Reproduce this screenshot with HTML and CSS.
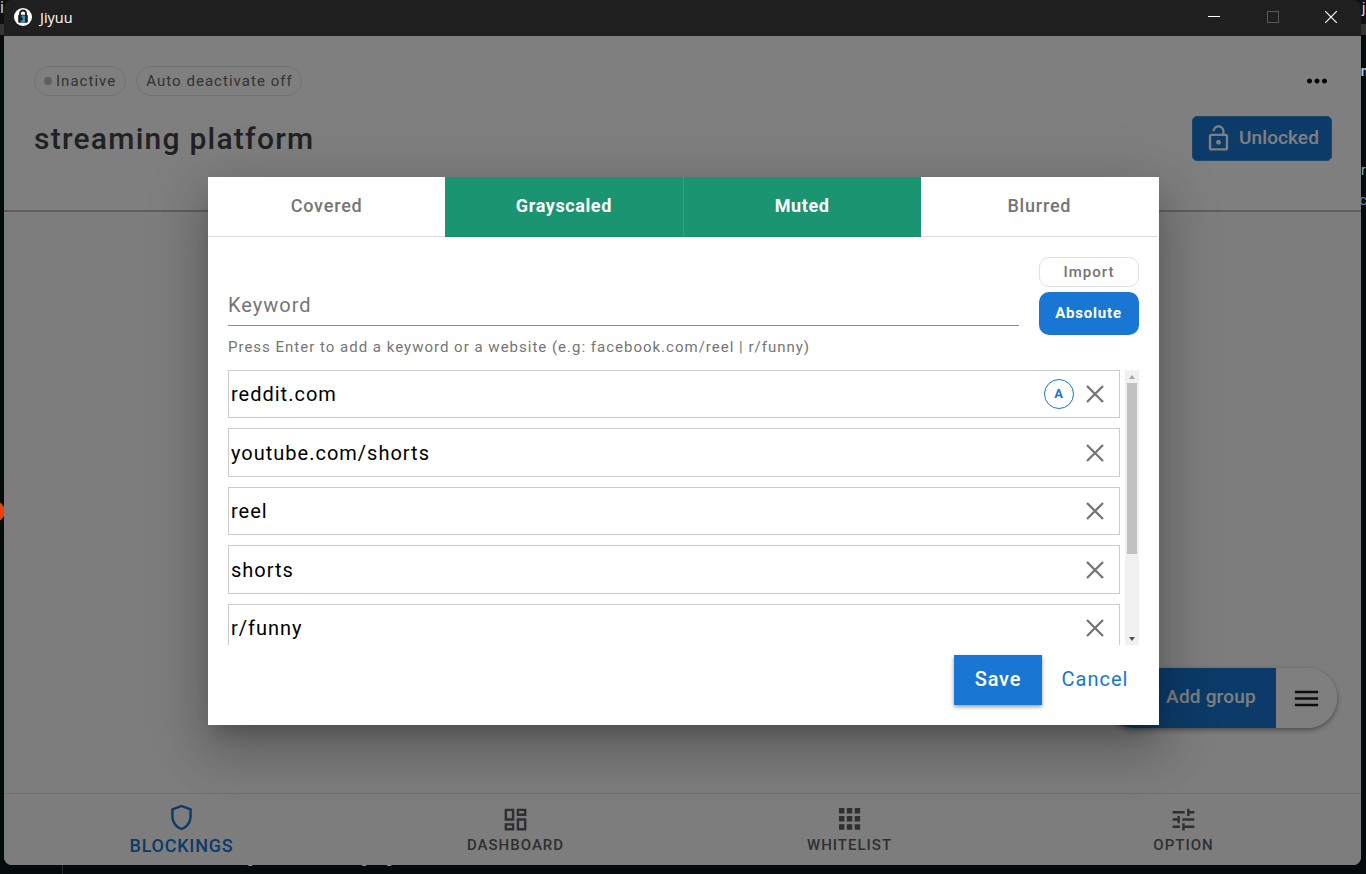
FILE: index.html
```html
<!DOCTYPE html>
<html lang="en">
  <head>
    <meta charset="UTF-8" />
    <title>Jiyuu</title>
    <link rel="stylesheet" href="styles.css">
  </head>
  <body>
    <!-- bits of the desktop that stick out around the window -->
    <div class="desktop-bar"></div>
    <span class="scrap scrap-i">i</span>
    <span class="scrap scrap-j">j</span>
    <span class="scrap scrap-in">in</span>
    <span class="scrap scrap-r">r</span>
    <span class="scrap scrap-ec">ec</span>
    <span class="scrap scrap-foot">g</span>
    <span class="scrap scrap-foot2">g</span>
    <span class="scrap scrap-foot3">g,</span>
    <div class="scrap scrap-dot"></div>
    <div class="scrap scrap-line"></div>

    <div class="window">
      <div class="titlebar">
        <svg class="logo" viewBox="0 0 18 18">
          <circle cx="9" cy="9" r="9" fill="#fff" />
          <path d="M6 8V5.500a3 3 0 0 1 6 0V8" fill="none" stroke="#1f1f1f" stroke-width="1.800" />
          <rect x="4.200" y="6.800" width="9.600" height="8" rx="1" fill="#1f1f1f" />
          <path d="M7.500 7.500h3.400v7H6.800v-1.900h1.900V9.200H7.500z" fill="#2aa5c9" />
        </svg>
        <span class="app-name">Jiyuu</span>
        <div class="win-controls">
          <svg viewBox="0 0 12 12"><path d="M0 5.500h12" stroke="#fff" /></svg>
          <svg viewBox="0 0 12 12"><rect x=".5" y=".5" width="11" height="11" fill="none" stroke="#5a5a5a" /></svg>
          <svg viewBox="0 0 12 12"><path d="M0 0l12 12M12 0L0 12" stroke="#fff" stroke-width="1.200" /></svg>
        </div>
      </div>

      <div class="app">
        <header class="header">
          <div class="header-row">
            <div class="chips">
              <span class="chip chip-status">Inactive</span>
              <span class="chip">Auto deactivate off</span>
            </div>
            <svg class="more" viewBox="0 0 24 24"><path d="M6 10c-1.100 0-2 .9-2 2s.9 2 2 2 2-.9 2-2-.9-2-2-2zm12 0c-1.100 0-2 .9-2 2s.9 2 2 2 2-.9 2-2-.9-2-2-2zm-6 0c-1.100 0-2 .9-2 2s.9 2 2 2 2-.9 2-2-.9-2-2-2z" /></svg>
          </div>
          <div class="header-row header-title">
            <h1>streaming platform</h1>
            <button class="unlocked">
              <svg viewBox="0 0 24 24"><path d="M12 17c1.100 0 2-.9 2-2s-.9-2-2-2-2 .9-2 2 .9 2 2 2zm6-9h-1V6c0-2.760-2.240-5-5-5S7 3.240 7 6h1.900c0-1.710 1.390-3.100 3.100-3.100s3.100 1.390 3.100 3.100v2H6c-1.100 0-2 .9-2 2v10c0 1.100.9 2 2 2h12c1.100 0 2-.9 2-2V10c0-1.100-.9-2-2-2zm0 12H6V10h12v10z" /></svg>
              <span>Unlocked</span>
            </button>
          </div>
        </header>

        <main class="content"></main>

        <div class="fab">
          <button class="fab-add">Add group</button>
          <button class="fab-menu">
            <svg viewBox="0 0 24 24"><path d="M3 18h18v-2H3v2zm0-5h18v-2H3v2zm0-7v2h18V6H3z" /></svg>
          </button>
        </div>

        <nav class="bottom-nav">
          <a class="nav-item active">
            <svg viewBox="0 0 24 24"><path d="M12 1.500L3.500 4.600v6.600c0 5.200 3.500 9.900 8.500 11.300 5-1.400 8.500-6.100 8.500-11.300V4.600zm6.500 9.700c0 4.100-2.700 7.900-6.500 9.200-3.800-1.300-6.500-5.100-6.500-9.200V6L12 3.600 18.500 6z" /></svg>
            <span>BLOCKINGS</span>
          </a>
          <a class="nav-item">
            <svg viewBox="0 0 24 24"><path d="M19 5v2h-4V5h4M9 5v6H5V5h4m10 8v6h-4v-6h4M9 17v2H5v-2h4M21 3h-8v6h8V3zM11 3H3v10h8V3zm10 8h-8v10h8V11zm-10 4H3v6h8v-6z" /></svg>
            <span>DASHBOARD</span>
          </a>
          <a class="nav-item">
            <svg viewBox="0 0 24 24"><path d="M3.300 2.500h4.500v4.500H3.300zm6.500 0h4.500v4.500H9.800zm6.500 0h4.500v4.500h-4.500zM3.300 9.200h4.500v4.500H3.300zm6.500 0h4.500v4.500H9.800zm6.500 0h4.500v4.500h-4.500zM3.300 15.900h4.500v4.500H3.300zm6.500 0h4.500v4.500H9.800zm6.500 0h4.500v4.500h-4.500z" /></svg>
            <span>WHITELIST</span>
          </a>
          <a class="nav-item">
            <svg viewBox="0 0 24 24"><path d="M3 17v2h6v-2H3zM3 5v2h10V5H3zm10 16v-2h8v-2h-8v-2h-2v6h2zM7 9v2H3v2h4v2h2V9H7zm14 4v-2H11v2h10zm-6-4h2V7h4V5h-4V3h-2v6z" /></svg>
            <span>OPTION</span>
          </a>
        </nav>

        <div class="backdrop">
          <div class="dialog">
            <div class="tabs">
              <button class="tab">Covered</button>
              <button class="tab on">Grayscaled</button>
              <button class="tab on">Muted</button>
              <button class="tab">Blurred</button>
            </div>
            <div class="dialog-body">
              <div class="entry">
                <div class="field">Keyword</div>
                <div class="entry-buttons">
                  <button class="import">Import</button>
                  <button class="absolute">Absolute</button>
                </div>
              </div>
              <p class="hint">Press Enter to add a keyword or a website (e.g: facebook.com/reel | r/funny)</p>
              <div class="list-wrap">
                <ul class="list">
                  <li>
                    <span>reddit.com</span>
                    <b class="badge">A</b>
                    <svg class="close" viewBox="0 0 18 18"><path d="M1 1l16 16M17 1L1 17" /></svg>
                  </li>
                  <li>
                    <span>youtube.com/shorts</span>
                    <svg class="close" viewBox="0 0 18 18"><path d="M1 1l16 16M17 1L1 17" /></svg>
                  </li>
                  <li>
                    <span>reel</span>
                    <svg class="close" viewBox="0 0 18 18"><path d="M1 1l16 16M17 1L1 17" /></svg>
                  </li>
                  <li>
                    <span>shorts</span>
                    <svg class="close" viewBox="0 0 18 18"><path d="M1 1l16 16M17 1L1 17" /></svg>
                  </li>
                  <li>
                    <span>r/funny</span>
                    <svg class="close" viewBox="0 0 18 18"><path d="M1 1l16 16M17 1L1 17" /></svg>
                  </li>
                </ul>
                <div class="scrollbar">
                  <svg viewBox="0 0 6 4"><path d="M0 4l3-4 3 4z" fill="#a3a3a3" /></svg>
                  <div class="thumb"></div>
                  <svg viewBox="0 0 6 4"><path d="M0 0l3 4 3-4z" fill="#505050" /></svg>
                </div>
              </div>
              <div class="actions">
                <button class="save">Save</button>
                <button class="cancel">Cancel</button>
              </div>
            </div>
          </div>
        </div>
      </div>
    </div>
  </body>
</html>
```
FILE: styles.css
```css
* {
  box-sizing: border-box;
}

body {
  margin: 0;
  height: 874px;
  padding: 0 4px;
  background: #050a0a;
  font-family: Roboto, sans-serif;
  position: relative;
  overflow: hidden;
}

button {
  font-family: inherit;
  border: none;
  background: none;
  padding: 0;
  margin: 0;
}

/* desktop */
.desktop-bar {
  position: absolute;
  top: 0;
  left: 0;
  width: 100%;
  height: 35px;
  background: linear-gradient(#0c1214 70%, #333 70%);
}

.scrap {
  position: absolute;
  font-size: 16px;
  line-height: 16px;
  color: #8fa3ad;
}

.scrap-i {
  left: 0;
  top: 0;
  color: #c3ced6;
}

.scrap-j {
  left: 1362px;
  top: 0;
  font-size: 14px;
  color: #ddd;
}

.scrap-in {
  left: 1357px;
  top: 63px;
  font-size: 14px;
  font-weight: 700;
  color: #9cc4e4;
}

.scrap-r {
  left: 1361px;
  top: 162px;
  font-size: 14px;
}

.scrap-ec {
  left: 1352px;
  top: 192px;
  font-size: 14px;
  color: #4d8fc4;
}

.scrap-foot {
  left: 246px;
  top: 850px;
}

.scrap-foot2 {
  left: 360px;
  top: 850px;
}

.scrap-foot3 {
  left: 385px;
  top: 850px;
}

.scrap-dot {
  left: -16px;
  top: 501px;
  width: 21px;
  height: 21px;
  border-radius: 50%;
  background: #e8430a;
}

.scrap-line {
  left: 62px;
  top: 860px;
  width: 1px;
  height: 14px;
  background: #222c2c;
}

/* window */
.window {
  position: relative;
  width: 1357px;
  height: 865px;
  border-radius: 8px;
  overflow: hidden;
  display: flex;
  flex-direction: column;
}

.titlebar {
  height: 36px;
  background: #1f1f1f;
  display: flex;
  align-items: center;
  padding: 0 24px 2px 10px;
  color: #fff;
}

.logo {
  width: 18px;
  height: 18px;
}

.app-name {
  margin-left: 8px;
  font-family: "Open Sans", sans-serif;
  font-size: 14.5px;
  flex: 1;
}

.win-controls {
  display: flex;
  gap: 46.5px;
}

.win-controls svg {
  width: 12px;
  height: 12px;
}

.app {
  position: relative;
  flex: 1;
  display: flex;
  flex-direction: column;
  background: #fafafc;
}

.header {
  height: 176px;
  padding: 30px 29px 0 30px;
  background: #fff;
  border-bottom: 2px solid #bcbcbc;
}

.header-row {
  display: flex;
  justify-content: space-between;
  align-items: center;
}

.chips {
  display: flex;
  gap: 10px;
}

.chip {
  height: 30px;
  border: 1px solid #e4e4e4;
  border-radius: 15px;
  padding: 0 8px 0 9px;
  font-size: 15px;
  line-height: 28px;
  letter-spacing: 1.03px;
  color: #666;
}

.chip-status {
  padding-right: 9px;
}

.chip-status::before {
  content: "";
  display: inline-block;
  width: 8px;
  height: 8px;
  margin: 0 4px 1px 0;
  border-radius: 50%;
  background: #bdbdbd;
}

.more {
  width: 30px;
  height: 30px;
}

.header-title {
  margin-top: 20px;
}

h1 {
  margin: 0;
  font-size: 30px;
  font-weight: 500;
  letter-spacing: 1.25px;
  color: #404347;
}

.unlocked {
  display: flex;
  align-items: center;
  gap: 6px;
  width: 140px;
  height: 45px;
  padding-left: 11px;
  border-radius: 5px;
  background: #1976d2;
  border: 1px solid #3f8bd8;
  color: #fff;
  font-size: 19px;
  font-weight: 500;
  letter-spacing: .1px;
}

.unlocked span {
  padding-bottom: 2px;
}

.unlocked svg {
  width: 29px;
  height: 29px;
  fill: #fff;
}

.content {
  flex: 1;
}

.fab {
  position: absolute;
  right: 24px;
  bottom: 137px;
  height: 60px;
  display: flex;
  border-radius: 30px;
  overflow: hidden;
  box-shadow: 0 2px 5px rgba(0, 0, 0, .4);
}

.fab-add {
  width: 172px;
  padding: 0 0 3px 42px;
  background: #1976d2;
  color: #fff;
  font-size: 19px;
  font-weight: 500;
  letter-spacing: .2px;
}

.fab-menu {
  width: 61px;
  background: #fff;
}

.fab-menu svg {
  display: block;
  width: 31px;
  height: 31px;
  margin: auto;
  fill: #1c1c1c;
}

.bottom-nav {
  height: 72px;
  padding: 0 10.5px;
  display: flex;
  border-top: 1px solid #e2e2e2;
}

.nav-item {
  flex: 1;
  display: flex;
  flex-direction: column;
  align-items: center;
  padding-top: 11px;
  color: #5f5f66;
  font-size: 15px;
  font-weight: 500;
  line-height: 18px;
  letter-spacing: 1px;
}

.nav-item svg {
  width: 29px;
  height: 29px;
  margin-bottom: 2px;
  fill: currentColor;
}

.nav-item.active {
  color: #1976d2;
  font-size: 18px;
  letter-spacing: .75px;
  padding-top: 9px;
}

.nav-item.active svg {
  margin-bottom: 5px;
}

/* dialog */
.backdrop {
  position: absolute;
  inset: 0;
  display: flex;
  align-items: center;
  justify-content: center;
  padding-left: 2px;
  background: rgba(0, 0, 0, .5);
}

.dialog {
  width: 951px;
  height: 548px;
  display: flex;
  flex-direction: column;
  background: #fff;
  box-shadow: 0 14px 18px -8px rgba(0, 0, 0, .2), 0 28px 46px 4px rgba(0, 0, 0, .14), 0 11px 56px 10px rgba(0, 0, 0, .12);
}

.tabs {
  display: flex;
  height: 60px;
  padding-right: 1px;
}

.tab {
  flex: 1;
  padding-bottom: 2px;
  border-bottom: 1px solid #ddd;
  color: #757575;
  font-size: 18px;
  font-weight: 500;
  letter-spacing: .8px;
}

.tab.on {
  background: #1a9471;
  border-bottom-color: #1a8a69;
  color: #fff;
  font-weight: 700;
  letter-spacing: .6px;
}

.tab.on + .tab.on {
  border-left: 1px solid #3a9f82;
}

.dialog-body {
  flex: 1;
  padding: 20px;
  display: flex;
  flex-direction: column;
}

.entry {
  display: flex;
  align-items: flex-end;
  gap: 20px;
  height: 78px;
}

.field {
  flex: 1;
  height: 42px;
  margin-bottom: 9px;
  border-bottom: 1px solid #8c8c8c;
  color: #757575;
  font-size: 20px;
  line-height: 43px;
  letter-spacing: 1px;
}

.entry-buttons {
  width: 100px;
  display: flex;
  flex-direction: column;
  gap: 5px;
}

.import {
  height: 30px;
  border: 1px solid #e0e0e0;
  border-radius: 10px;
  color: #757575;
  font-size: 15px;
  font-weight: 500;
  letter-spacing: 1px;
}

.absolute {
  height: 43px;
  padding-right: 1px;
  border-radius: 10px;
  background: #1976d2;
  color: #fff;
  font-size: 15px;
  font-weight: 700;
  letter-spacing: .8px;
}

.hint {
  margin: 3px 0 14px;
  color: #757575;
  font-size: 15px;
  line-height: 18px;
  letter-spacing: 1px;
}

.list-wrap {
  display: flex;
  gap: 5px;
  height: 275px;
  overflow: hidden;
}

.list {
  flex: 1;
  margin: 0;
  padding: 0;
  list-style: none;
}

.list li {
  display: flex;
  align-items: center;
  height: 48.5px;
  margin-bottom: 10px;
  padding: 1px 15px 0 2px;
  border: 1px solid #ccc;
  font-size: 20px;
  letter-spacing: 1px;
}

.list span {
  flex: 1;
}

.badge {
  width: 30px;
  height: 30px;
  margin-right: 12px;
  border: 1px solid #1976d2;
  border-radius: 50%;
  color: #1976d2;
  font-size: 13px;
  line-height: 27px;
  text-align: center;
}

.close {
  width: 18px;
  height: 18px;
  fill: none;
  stroke: #757575;
  stroke-width: 2.3;
}

.scrollbar {
  width: 14px;
  background: #f1f1f1;
  display: flex;
  flex-direction: column;
  align-items: center;
}

.scrollbar svg {
  width: 6px;
  height: 4px;
  margin: 5px 0 4px;
}

.thumb {
  width: 10px;
  height: 171px;
  margin-bottom: auto;
  background: #c1c1c1;
}

.actions {
  display: flex;
  justify-content: flex-end;
  margin-top: 10px;
}

.save {
  width: 88px;
  height: 50px;
  padding-bottom: 2px;
  background: #1976d2;
  color: #fff;
  font-size: 20px;
  font-weight: 500;
  letter-spacing: .8px;
  box-shadow: 0 2px 4px rgba(0, 0, 0, .4);
}

.cancel {
  width: 97px;
  padding: 0 0 2px 9px;
  color: #1976d2;
  font-size: 20px;
  letter-spacing: 1px;
}
```
